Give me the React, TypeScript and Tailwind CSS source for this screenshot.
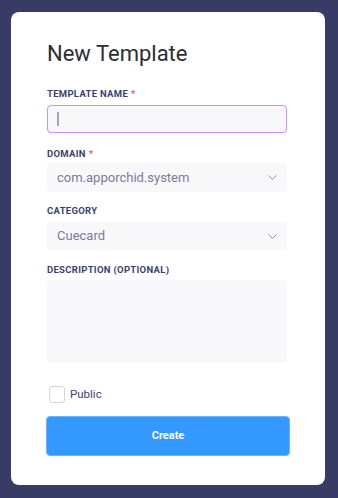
const labelCls =
  "h-[12px] text-[9.5px] leading-[12px] font-bold tracking-[0.3px] text-[#3c3f6b] uppercase";

function Req() {
  return <span className="ml-[3px] text-[#f25c5c]">*</span>;
}

function Chevron() {
  return (
    <svg width="9" height="5" viewBox="0 0 9 5" fill="none" className="shrink-0">
      <path d="M0.8 0.8l3.7 3.5 3.7-3.5" stroke="#8b8ea5" strokeWidth="1" strokeLinecap="round" strokeLinejoin="round" />
    </svg>
  );
}

function SelectBox({ value, h }: { value: string; h: string }) {
  return (
    <div
      className={`${h} w-[240px] rounded-[4px] bg-[#f8f8fb] flex items-center justify-between pl-[10px] pr-[10px]`}
    >
      <span className="text-[13px] text-[#7a7d96]">{value}</span>
      <Chevron />
    </div>
  );
}

export default function App() {
  return (
    <div
      className="min-h-[498px] bg-[#383b66] pt-[12px] pl-[11px]"
      style={{ fontFamily: "Roboto, 'Liberation Sans', sans-serif" }}
    >
      <div className="w-[314px] h-[473px] bg-white rounded-[8px] pl-[36px] pt-[28px]">
        {/* Title */}
        <h1 className="text-[22px] leading-[28px] text-[#2e2e33]">New Template</h1>

        {/* Template name */}
        <div className={`${labelCls} mt-[20px]`}>
          Template Name<Req />
        </div>
        <div className="mt-[5px] h-[28px] w-[240px] rounded-[4px] bg-[#f8f8fb] border-[1.5px] border-[#c690ff] flex items-center pl-[9px]">
          <span className="w-[1.5px] h-[14px] bg-[#a3a4bd]" />
        </div>

        {/* Domain */}
        <div className={`${labelCls} mt-[15px]`}>
          Domain<Req />
        </div>
        <div className="mt-[3px]">
          <SelectBox value="com.apporchid.system" h="h-[29px]" />
        </div>

        {/* Category */}
        <div className={`${labelCls} mt-[13px]`}>Category</div>
        <div className="mt-[5px]">
          <SelectBox value="Cuecard" h="h-[28px]" />
        </div>

        {/* Description */}
        <div className={`${labelCls} mt-[14px]`}>Description (optional)</div>
        <div className="mt-[4px] h-[83px] w-[240px] rounded-[4px] bg-[#f8f8fb]" />

        {/* Public */}
        <div className="mt-[23px] h-[17px] flex items-center pl-[2px]">
          <span className="w-[16px] h-[17px] rounded-[3px] border border-[#d6d6da] bg-white" />
          <span className="ml-[5px] text-[11.5px] text-[#41446b]">Public</span>
        </div>

        {/* Create */}
        <button className="mt-[13px] -ml-[1px] w-[244px] h-[40px] rounded-[4px] bg-[#3399ff] border border-[#6db5ff] text-white text-[11px] font-bold">
          Create
        </button>
      </div>
    </div>
  );
}
